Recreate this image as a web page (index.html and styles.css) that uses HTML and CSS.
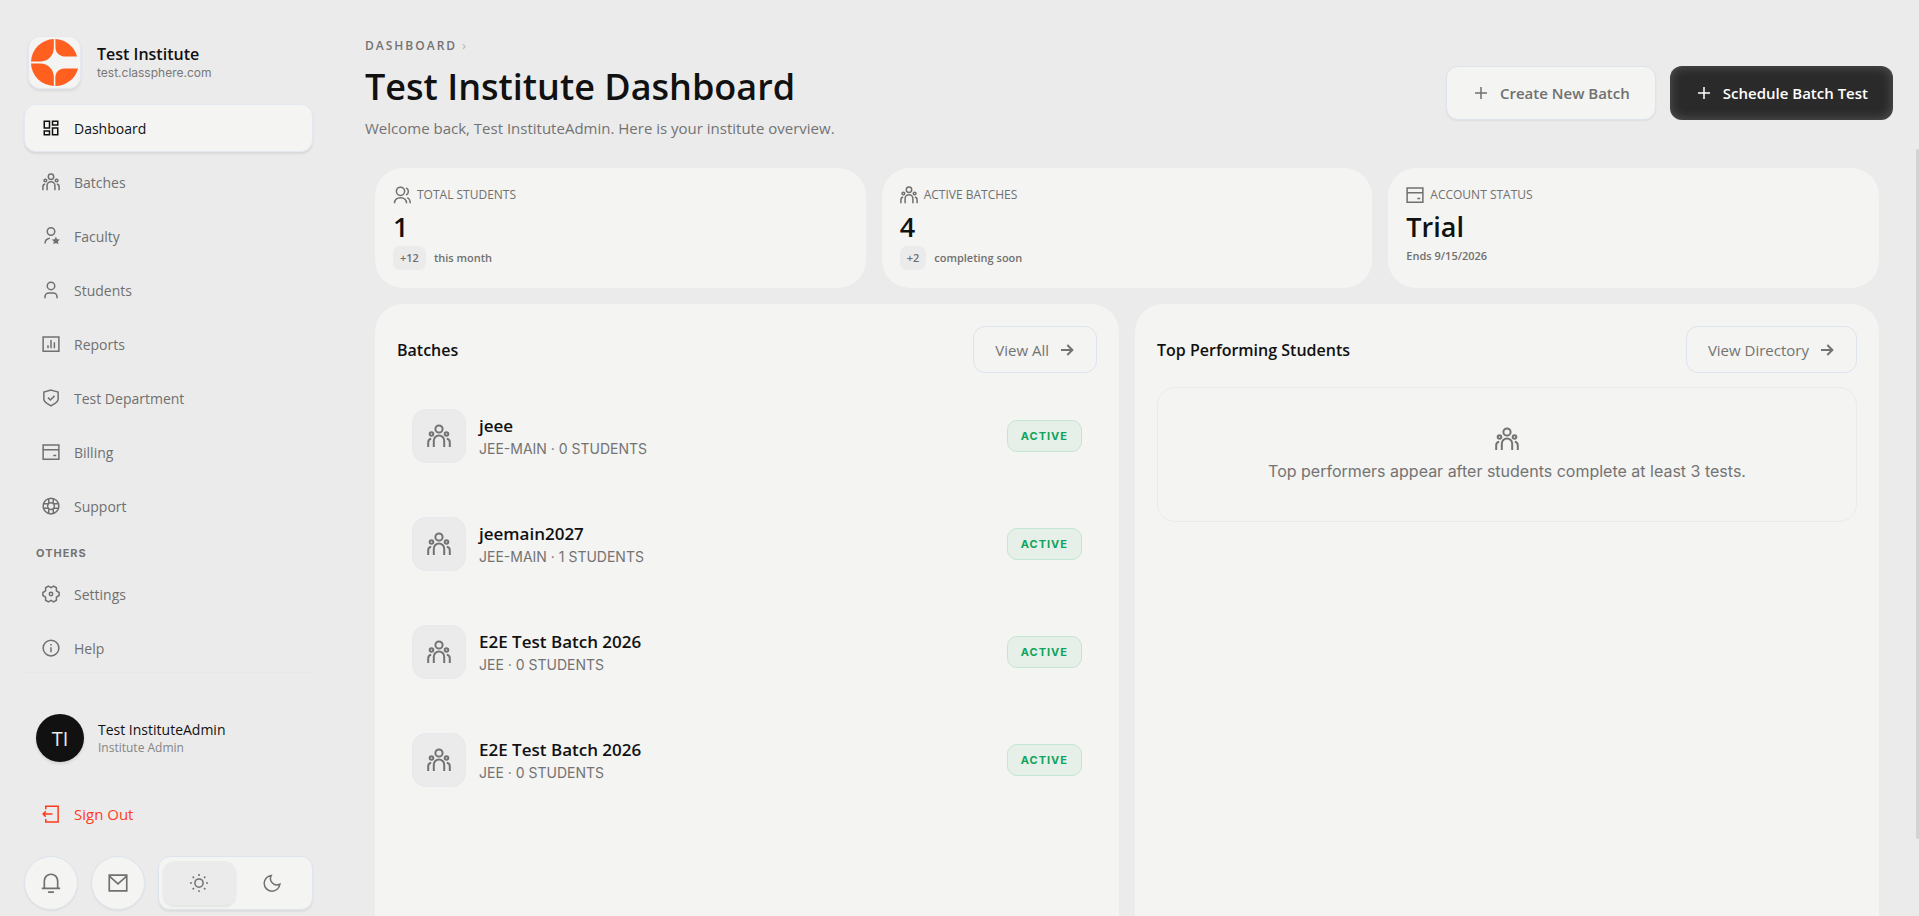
FILE: index.html
```html
<!DOCTYPE html>
<html lang="en">
<head>
    <meta charset="UTF-8">
    <meta name="viewport" content="width=device-width, initial-scale=1.0">
    <title>Test Institute Dashboard</title>
    <link rel="stylesheet" href="styles.css">
</head>
<body>

<!-- Icon set -->
<svg class="icon-defs" aria-hidden="true">
    <symbol id="i-grid" viewBox="0 0 24 24"><path d="M3 3h7v9H3zM14 3h7v5h-7zM14 12h7v9h-7zM3 16h7v5H3z"/></symbol>
    <symbol id="i-group" viewBox="0 0 24 24"><circle cx="12" cy="5" r="3.6"/><circle cx="4.5" cy="10" r="1.8"/><circle cx="19.5" cy="10" r="1.8"/><path d="M6.800 23v-6.300a5.200 5.200 0 0 1 10.400 0V23M1.200 23v-4.500c0-2 1-3.400 3-3.700M22.800 23v-4.500c0-2-1-3.400-3-3.700"/></symbol>
    <symbol id="i-user-star" viewBox="0 0 24 24"><circle cx="12" cy="6" r="5"/><path d="M4 22c0-4 2.500-6.500 6.500-7"/><path class="solid" d="M18.500 13l1.700 3.300 3.700.5-2.700 2.600.7 3.600-3.400-1.700-3.400 1.700.7-3.600-2.700-2.600 3.700-.5z"/></symbol>
    <symbol id="i-user" viewBox="0 0 24 24"><circle cx="12" cy="6.500" r="5"/><path d="M4 23v-2a5 5 0 0 1 5-5h6a5 5 0 0 1 5 5v2"/></symbol>
    <symbol id="i-users" viewBox="0 0 24 24"><circle cx="10" cy="7" r="5.500"/><path d="M2 23c0-4.500 3.200-7.500 8-7.500s8 3 8 7.500M17.500 2.500c4 2 4 7.500 0 9.500M19 15.500c2.500 1.200 4 3.800 4 7.500"/></symbol>
    <symbol id="i-chart" viewBox="0 0 24 24"><path d="M1.500 2.500h21v19h-21zM8 17.500v-4M12 17.500v-11M16.500 17.500v-8"/></symbol>
    <symbol id="i-shield" viewBox="0 0 24 24"><path d="M12 1.500l9.500 2.500v9.500c0 4-6 6.500-9.500 9-3.500-2.500-9.500-5-9.500-9V4zM8 11.500l3.200 3.200 5.500-5.500"/></symbol>
    <symbol id="i-card" viewBox="0 0 24 24"><path d="M1.500 2.500h21v19h-21zM1.500 9h21M15 16.500h4"/></symbol>
    <symbol id="i-support" viewBox="0 0 24 24"><circle cx="12" cy="12" r="10.500"/><circle cx="12" cy="12" r="4.500"/><path d="M9 2.500v6M15 2.500v6M9 15.500v6M15 15.500v6M2.500 9h6M2.500 15h6M15.500 9h6M15.500 15h6"/></symbol>
    <symbol id="i-gear" viewBox="0 0 24 24"><path d="M8.500 1.500l3.500 2 3.500-2 3.700 2.200v4.100L22.800 10v4l-3.600 2.200v4.100l-3.700 2.200-3.500-2-3.500 2-3.700-2.200v-4.100L1.200 14v-4l3.600-2.200V3.700z"/><circle cx="12" cy="12" r="2.300"/></symbol>
    <symbol id="i-info" viewBox="0 0 24 24"><circle cx="12" cy="12" r="10.500"/><path d="M12 11v6.500M12 6.500v2"/></symbol>
    <symbol id="i-signout" viewBox="0 0 24 24"><path d="M5 5.500V1.500h16.500v21H5v-4M14 12H2M5 8.500L1.500 12 5 15.500"/></symbol>
    <symbol id="i-bell" viewBox="0 0 24 24"><path d="M1 18.500h22M4 18.500V9.500a8 8 0 0 1 16 0v9M8.500 23h7"/></symbol>
    <symbol id="i-mail" viewBox="0 0 24 24"><path d="M1.500 2.500h21v19h-21zM2 4l10 9L22 4"/></symbol>
    <symbol id="i-sun" viewBox="0 0 24 24"><circle cx="12" cy="12" r="5.500"/><path d="M12 0v2.500M12 21.500V24M0 12h2.500M21.500 12H24M3.500 3.500l1.800 1.800M18.700 18.700l1.800 1.800M3.500 20.500l1.800-1.800M18.700 5.300l1.800-1.800"/></symbol>
    <symbol id="i-moon" viewBox="0 0 24 24"><path d="M11 2a8.500 8.500 0 0 0 11.500 11.500A10.500 10.500 0 1 1 11 2z"/></symbol>
    <symbol id="i-plus" viewBox="0 0 24 24"><path d="M12 4v16M4 12h16"/></symbol>
    <symbol id="i-arrow" viewBox="0 0 24 24"><path d="M3 12h16M12.500 4.500L20 12l-7.500 7.500"/></symbol>
</svg>

<div class="app">

    <!-- Sidebar -->
    <aside class="sidebar">
        <div class="brand">
            <div class="brand-logo">
                <svg viewBox="0 0 48 48" aria-hidden="true">
                    <path d="M23.300 0v9c0 8-6 14-14 14H0A24 24 0 0 1 23.300 0z"/>
                    <path d="M24.900 0A24 24 0 0 1 47 17.800H34c-5 0-9-4-9-9z"/>
                    <path d="M0 25h9.300c8 0 14 6 14 14v9A24 24 0 0 1 0 25z"/>
                    <path d="M24.900 48v-9c0-5 4-9 9-9H48A24 24 0 0 1 24.900 48z"/>
                </svg>
            </div>
            <div class="brand-text">
                <div class="brand-name">Test Institute</div>
                <div class="brand-url">test.classphere.com</div>
            </div>
        </div>

        <nav class="nav">
            <a href="#" class="nav-item active"><svg class="icon"><use href="#i-grid"/></svg>Dashboard</a>
            <a href="#" class="nav-item"><svg class="icon"><use href="#i-group"/></svg>Batches</a>
            <a href="#" class="nav-item"><svg class="icon"><use href="#i-user-star"/></svg>Faculty</a>
            <a href="#" class="nav-item"><svg class="icon"><use href="#i-user"/></svg>Students</a>
            <a href="#" class="nav-item"><svg class="icon"><use href="#i-chart"/></svg>Reports</a>
            <a href="#" class="nav-item"><svg class="icon"><use href="#i-shield"/></svg>Test Department</a>
            <a href="#" class="nav-item"><svg class="icon"><use href="#i-card"/></svg>Billing</a>
            <a href="#" class="nav-item"><svg class="icon"><use href="#i-support"/></svg>Support</a>
        </nav>

        <div class="nav-label">Others</div>
        <nav class="nav">
            <a href="#" class="nav-item"><svg class="icon"><use href="#i-gear"/></svg>Settings</a>
            <a href="#" class="nav-item"><svg class="icon"><use href="#i-info"/></svg>Help</a>
        </nav>

        <div class="sidebar-footer">
            <div class="profile">
                <div class="avatar">TI</div>
                <div>
                    <div class="profile-name">Test InstituteAdmin</div>
                    <div class="profile-role">Institute Admin</div>
                </div>
            </div>
            <button type="button" class="nav-item sign-out"><svg class="icon"><use href="#i-signout"/></svg>Sign Out</button>
            <div class="quick-actions">
                <button type="button" class="round-btn" aria-label="Notifications"><svg class="icon"><use href="#i-bell"/></svg></button>
                <button type="button" class="round-btn" aria-label="Messages"><svg class="icon"><use href="#i-mail"/></svg></button>
                <div class="theme-toggle">
                    <button type="button" class="theme-btn selected" aria-label="Light theme"><svg class="icon"><use href="#i-sun"/></svg></button>
                    <button type="button" class="theme-btn" aria-label="Dark theme"><svg class="icon"><use href="#i-moon"/></svg></button>
                </div>
            </div>
        </div>
    </aside>

    <!-- Main content -->
    <main class="main">
        <header class="page-header">
            <div>
                <div class="breadcrumb">Dashboard <span>›</span></div>
                <h1>Test Institute Dashboard</h1>
                <p>Welcome back, Test InstituteAdmin. Here is your institute overview.</p>
            </div>
            <div class="header-actions">
                <button type="button" class="btn"><svg class="icon"><use href="#i-plus"/></svg>Create New Batch</button>
                <button type="button" class="btn btn-dark"><svg class="icon"><use href="#i-plus"/></svg>Schedule Batch Test</button>
            </div>
        </header>

        <div class="content">
            <section class="stats">
                <div class="stat-card">
                    <div class="stat-label"><svg class="icon"><use href="#i-users"/></svg>Total Students</div>
                    <div class="stat-value">1</div>
                    <div class="stat-note"><span class="chip">+12</span>this month</div>
                </div>
                <div class="stat-card">
                    <div class="stat-label"><svg class="icon"><use href="#i-group"/></svg>Active Batches</div>
                    <div class="stat-value">4</div>
                    <div class="stat-note"><span class="chip">+2</span>completing soon</div>
                </div>
                <div class="stat-card">
                    <div class="stat-label"><svg class="icon"><use href="#i-card"/></svg>Account Status</div>
                    <div class="stat-value">Trial</div>
                    <div class="stat-note">Ends 9/15/2026</div>
                </div>
            </section>

            <section class="panels">
                <div class="panel">
                    <div class="panel-header">
                        <h2>Batches</h2>
                        <a href="#" class="link-btn">View All<svg class="icon"><use href="#i-arrow"/></svg></a>
                    </div>
                    <div class="batch-list">
                        <div class="batch">
                            <div class="batch-icon"><svg class="icon"><use href="#i-group"/></svg></div>
                            <div class="batch-info">
                                <div class="batch-name">jeee</div>
                                <div class="batch-meta">JEE-MAIN · 0 STUDENTS</div>
                            </div>
                            <span class="badge">ACTIVE</span>
                        </div>
                        <div class="batch">
                            <div class="batch-icon"><svg class="icon"><use href="#i-group"/></svg></div>
                            <div class="batch-info">
                                <div class="batch-name">jeemain2027</div>
                                <div class="batch-meta">JEE-MAIN · 1 STUDENTS</div>
                            </div>
                            <span class="badge">ACTIVE</span>
                        </div>
                        <div class="batch">
                            <div class="batch-icon"><svg class="icon"><use href="#i-group"/></svg></div>
                            <div class="batch-info">
                                <div class="batch-name">E2E Test Batch 2026</div>
                                <div class="batch-meta">JEE · 0 STUDENTS</div>
                            </div>
                            <span class="badge">ACTIVE</span>
                        </div>
                        <div class="batch">
                            <div class="batch-icon"><svg class="icon"><use href="#i-group"/></svg></div>
                            <div class="batch-info">
                                <div class="batch-name">E2E Test Batch 2026</div>
                                <div class="batch-meta">JEE · 0 STUDENTS</div>
                            </div>
                            <span class="badge">ACTIVE</span>
                        </div>
                    </div>
                </div>

                <div class="panel">
                    <div class="panel-header">
                        <h2>Top Performing Students</h2>
                        <a href="#" class="link-btn">View Directory<svg class="icon"><use href="#i-arrow"/></svg></a>
                    </div>
                    <div class="empty">
                        <svg class="icon"><use href="#i-group"/></svg>
                        <p>Top performers appear after students complete at least 3 tests.</p>
                    </div>
                </div>
            </section>
            <div class="scroll-thumb"></div>
        </div>
    </main>
</div>

</body>
</html>
```
FILE: styles.css
```css
/* General Reset and Fonts */
* {
    box-sizing: border-box;
}

body {
    font-family: 'Open Sans', 'Noto Sans', sans-serif;
    background-color: #ebebeb;
    margin: 0;
    color: #111;
    font-size: 14px;
}

h1, h2, p {
    margin: 0;
}

a {
    color: inherit;
    text-decoration: none;
}

button {
    font-family: inherit;
    cursor: pointer;
}

.icon-defs {
    display: none;
}

.icon {
    width: 18px;
    height: 18px;
    flex-shrink: 0;
    fill: none;
    stroke: currentColor;
    stroke-width: 2;
}

.solid {
    fill: currentColor;
    stroke: none;
}

.app {
    display: flex;
    height: 100vh;
    overflow: hidden;
}

/* Sidebar */
.sidebar {
    width: 337px;
    flex-shrink: 0;
    padding: 36px 24px 0;
}

.brand {
    display: flex;
    align-items: center;
    gap: 16px;
    padding: 0 4px;
    margin-bottom: 15px;
}

.brand-logo {
    width: 53px;
    height: 53px;
    padding: 2px;
    background-color: #f4f4f2;
    border: 1px solid #e4e8f0;
    border-radius: 12px;
    box-shadow: 0 2px 3px rgba(0, 0, 0, 0.08);
}

.brand-logo svg {
    display: block;
    width: 100%;
    fill: #ff5f1f;
}

.brand-name {
    font-size: 16px;
    line-height: 20px;
    font-weight: 600;
}

.brand-url {
    font-family: 'Inter', sans-serif;
    font-size: 12px;
    line-height: 18px;
    color: #777;
}

.nav {
    display: flex;
    flex-direction: column;
    gap: 6px;
}

.nav-item {
    display: flex;
    align-items: center;
    gap: 14px;
    height: 48px;
    padding: 0 17px;
    border: 1px solid transparent;
    border-radius: 12px;
    color: #707070;
    font-size: 14px;
    font-weight: 500;
}

.nav-item.active {
    background-color: #f4f4f2;
    border-color: #e4e8f0;
    box-shadow: 0 2px 2px rgba(0, 0, 0, 0.08);
    color: #111;
}

.nav-label {
    padding: 0 12px;
    margin: 15px 0 9px;
    font-family: 'Inter', sans-serif;
    font-size: 11px;
    line-height: 16px;
    font-weight: 700;
    letter-spacing: 1px;
    text-transform: uppercase;
    color: #737373;
}

.sidebar-footer {
    border-top: 1px solid #e8e8e9;
    padding-top: 41px;
}

.profile {
    display: flex;
    align-items: center;
    gap: 14px;
    padding: 0 12px;
    margin-bottom: 28px;
}

.avatar {
    display: flex;
    align-items: center;
    justify-content: center;
    width: 48px;
    height: 48px;
    border-radius: 50%;
    background-color: #111;
    color: #ebebeb;
    font-size: 20px;
    box-shadow: 0 2px 3px rgba(0, 0, 0, 0.1);
}

.profile-name {
    font-size: 14px;
    line-height: 20px;
    font-weight: 500;
}

.profile-role {
    font-size: 12px;
    line-height: 16px;
    color: #858585;
}

.sign-out {
    width: 100%;
    background: none;
    color: #ff3b1f;
    font-size: 15px;
}

.quick-actions {
    display: flex;
    gap: 13px;
    margin-top: 18px;
}

.round-btn {
    display: flex;
    align-items: center;
    justify-content: center;
    width: 54px;
    height: 54px;
    padding: 0;
    background-color: #f4f4f2;
    border: 1px solid #dde4ee;
    border-radius: 50%;
    color: #707070;
    box-shadow: 0 1px 2px rgba(0, 0, 0, 0.06);
}

.round-btn .icon {
    width: 20px;
    height: 20px;
}

.theme-toggle {
    display: flex;
    flex: 1;
    padding: 4px;
    background-color: #f4f4f2;
    border: 1px solid #dde4ee;
    border-radius: 12px;
    box-shadow: 0 2px 2px rgba(0, 0, 0, 0.06);
}

.theme-btn {
    display: flex;
    flex: 1;
    align-items: center;
    justify-content: center;
    padding: 0;
    background: none;
    border: 0;
    border-radius: 12px;
    color: #707070;
}

.theme-btn.selected {
    background-color: #ebebeb;
    box-shadow: 0 2px 3px rgba(0, 0, 0, 0.07);
}

/* Main */
.main {
    display: flex;
    flex-direction: column;
    flex: 1;
    min-width: 0;
}

.page-header {
    display: flex;
    align-items: flex-start;
    justify-content: space-between;
    height: 149px;
    padding: 37px 26px 0 28px;
}

.breadcrumb {
    font-size: 12px;
    line-height: 18px;
    font-weight: 600;
    letter-spacing: 2px;
    text-transform: uppercase;
    color: #737373;
}

.breadcrumb span {
    color: #b0b0b0;
    font-weight: 400;
}

.page-header h1 {
    margin-top: 8px;
    font-size: 36px;
    line-height: 48px;
    font-weight: 600;
}

.page-header p {
    margin-top: 6px;
    font-size: 15px;
    line-height: 22px;
    color: #737373;
}

.header-actions {
    display: flex;
    gap: 14px;
    margin-top: 29px;
}

.btn {
    display: flex;
    align-items: center;
    justify-content: center;
    gap: 10px;
    height: 54px;
    padding: 0 25px;
    background-color: #f4f4f2;
    border: 1px solid #dde4ee;
    border-radius: 12px;
    color: #707070;
    font-size: 15px;
    font-weight: 600;
    box-shadow: 0 1px 2px rgba(0, 0, 0, 0.06);
}

.btn-dark {
    background-color: #2a2a2a;
    border: 0;
    color: #fff;
    box-shadow: inset 0 0 12px rgba(255, 255, 255, 0.22);
}

.content {
    position: relative;
    display: flex;
    flex-direction: column;
    flex: 1;
    gap: 16px;
    padding: 19px 40px 0 38px;
}

.scroll-thumb {
    position: absolute;
    top: 0;
    right: 0;
    width: 3px;
    height: 90%;
    background-color: #d3d3d3;
    border-radius: 2px;
}

/* Stat cards */
.stats {
    display: grid;
    grid-template-columns: repeat(3, 1fr);
    gap: 16px;
}

.stat-card {
    height: 120px;
    padding: 18px;
    background-color: #f4f4f2;
    border-radius: 28px;
}

.stat-label {
    display: flex;
    align-items: center;
    gap: 6px;
    font-size: 12px;
    line-height: 18px;
    text-transform: uppercase;
    font-weight: 500;
    color: #707070;
}

.stat-value {
    margin-top: 6px;
    font-size: 27px;
    line-height: 34px;
    font-weight: 600;
}

.stat-note {
    display: flex;
    align-items: center;
    gap: 8px;
    margin-top: 2px;
    font-size: 11px;
    line-height: 20px;
    font-weight: 600;
    color: #707070;
}

.chip {
    padding: 2px 7px;
    background-color: #ebebeb;
    border-radius: 7px;
}

/* Panels */
.panels {
    display: grid;
    grid-template-columns: 1fr 1fr;
    gap: 16px;
    flex: 1;
}

.panel {
    padding: 22px;
    background-color: #f4f4f2;
    border-radius: 28px 28px 0 0;
}

.panel-header {
    display: flex;
    align-items: center;
    justify-content: space-between;
    margin-bottom: 14px;
}

.panel-header h2 {
    font-size: 16px;
    font-weight: 600;
}

.link-btn {
    display: flex;
    align-items: center;
    gap: 10px;
    height: 47px;
    padding: 0 21px;
    border: 1px solid #dde4ee;
    border-radius: 12px;
    color: #737373;
    font-size: 15px;
}

.link-btn .icon {
    width: 16px;
    height: 16px;
    stroke-width: 3;
}

.batch-list {
    display: flex;
    flex-direction: column;
    gap: 10px;
}

.batch {
    display: flex;
    align-items: center;
    gap: 13px;
    height: 98px;
    padding: 0 15px;
}

.batch-icon {
    display: flex;
    align-items: center;
    justify-content: center;
    width: 54px;
    height: 54px;
    background-color: #ebebeb;
    border: 1px solid #e6e8ec;
    border-radius: 14px;
    color: #737373;
}

.batch-icon .icon,
.empty .icon {
    width: 24px;
    height: 24px;
}

.batch-info {
    flex: 1;
    padding-top: 2px;
}

.batch-name {
    font-size: 17px;
    line-height: 24px;
    font-weight: 600;
}

.batch-meta {
    font-family: 'Inter', sans-serif;
    font-size: 14px;
    line-height: 22px;
    color: #737373;
}

.badge {
    padding: 0 13px;
    background-color: #e6efe8;
    border: 1px solid #c3e6d2;
    border-radius: 10px;
    color: #0fa35c;
    font-family: 'Inter', sans-serif;
    font-size: 11px;
    line-height: 30px;
    font-weight: 700;
    letter-spacing: 1px;
}

.empty {
    display: flex;
    flex-direction: column;
    align-items: center;
    justify-content: center;
    gap: 8px;
    height: 135px;
    border: 1px solid #eaebed;
    border-radius: 18px;
    color: #737373;
}

.empty p {
    font-family: 'Inter', sans-serif;
    font-size: 16px;
    line-height: 24px;
}
```
